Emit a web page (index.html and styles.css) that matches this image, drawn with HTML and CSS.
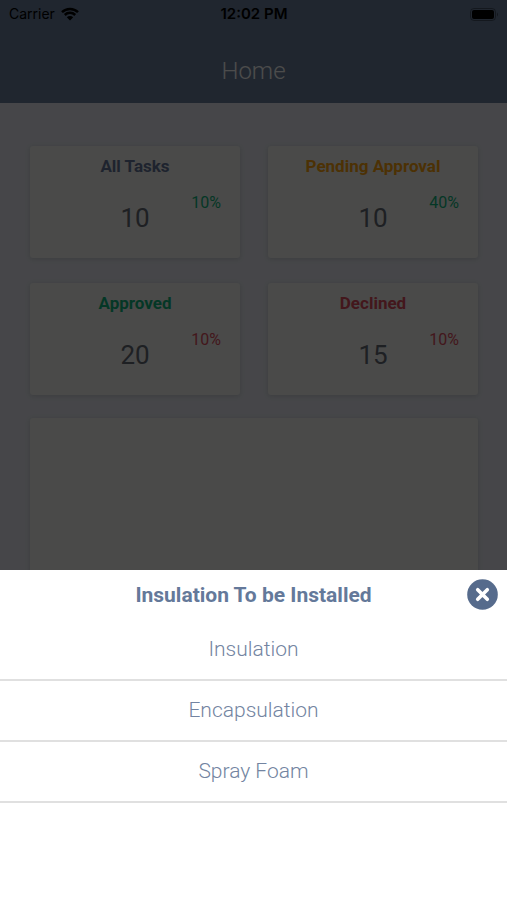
FILE: index.html
```html
<!DOCTYPE html>
<html lang="en">
<head>
<meta charset="utf-8">
<meta name="viewport" content="width=device-width, initial-scale=1">
<title>Home</title>
<link rel="stylesheet" href="styles.css">
</head>
<body>
<div class="screen">
  <header class="top">
    <div class="status">
      <span class="carrier">Carrier
        <svg class="wifi" viewBox="0 0 18 14" aria-hidden="true"><path d="M1 5.2a11.4 11.4 0 0 1 16 0M3.8 8a7.4 7.4 0 0 1 10.4 0" fill="none" stroke="#000" stroke-width="2.5"/><path d="M9 13.6 5.8 10.3a4.6 4.6 0 0 1 6.4 0z"/></svg>
      </span>
      <span class="time">12:02 PM</span>
      <svg class="battery" viewBox="0 0 29 13" aria-hidden="true"><rect x=".5" y=".5" width="25" height="12" rx="3.5" fill="none" stroke="#000" stroke-opacity=".35"/><rect x="2" y="2" width="22" height="9" rx="2"/><path d="M27 4.5q2 2 0 4z" opacity=".4"/></svg>
    </div>
    <h1 class="title">Home</h1>
  </header>
  <main class="board">
    <div class="stats">
      <section class="card">
        <h2 class="name navy">All Tasks</h2>
        <span class="rate green">10%</span>
        <span class="count">10</span>
      </section>
      <section class="card">
        <h2 class="name amber">Pending Approval</h2>
        <span class="rate green">40%</span>
        <span class="count">10</span>
      </section>
      <section class="card">
        <h2 class="name green">Approved</h2>
        <span class="rate red">10%</span>
        <span class="count">20</span>
      </section>
      <section class="card">
        <h2 class="name red">Declined</h2>
        <span class="rate red">10%</span>
        <span class="count">15</span>
      </section>
    </div>
    <section class="card wide"></section>
  </main>
</div>
<div class="scrim">
  <div class="sheet" role="dialog" aria-labelledby="sheet-title">
    <div class="sheet-head">
      <h2 class="sheet-title" id="sheet-title">Insulation To be Installed</h2>
      <button class="close" type="button" aria-label="Close">
        <svg viewBox="0 0 31 31" aria-hidden="true"><circle cx="15.5" cy="15.5" r="15.3" fill="#566b8c"/><path d="m10.7 10.7 9.6 9.6M20.3 10.7l-9.6 9.6" stroke="#fff" stroke-width="3.6" stroke-linecap="round"/></svg>
      </button>
    </div>
    <button class="option" type="button">Insulation</button>
    <button class="option" type="button">Encapsulation</button>
    <button class="option" type="button">Spray Foam</button>
  </div>
</div>
</body>
</html>
```
FILE: styles.css
```css
* {
  box-sizing: border-box;
}

body {
  margin: 0;
  font-family: Roboto, "Liberation Sans", sans-serif;
  background: #e9ecf3;
}

h1,
h2 {
  margin: 0;
}

.screen {
  display: flex;
  flex-direction: column;
  height: 100vh;
  overflow: hidden;
}

.top {
  padding-bottom: 16px;
  background: #6b7f9d;
}

.status {
  display: grid;
  grid-template-columns: 1fr auto 1fr;
  align-items: center;
  height: 28px;
  padding: 0 8px 0 9px;
  font: 15px/20px Inter, sans-serif;
}

.carrier {
  display: flex;
  align-items: center;
  gap: 6px;
  font-size: 14px;
}

.wifi {
  width: 18px;
  height: 14px;
}

.time {
  font-weight: 600;
}

.battery {
  justify-self: end;
  width: 29px;
  height: 13px;
}

.title {
  padding-top: 27px;
  color: #fff;
  font-size: 24px;
  font-weight: 300;
  line-height: 32px;
  text-align: center;
}

.board {
  display: flex;
  flex: 1;
  flex-direction: column;
  gap: 23px;
  padding: 43px 29px 0 30px;
}

.stats {
  display: grid;
  grid-template-columns: 1fr 1fr;
  gap: 25px 28px;
}

.card {
  display: flex;
  flex-direction: column;
  height: 112px;
  padding: 10px 19px;
  border-radius: 3px;
  background: #f8f8f5;
  box-shadow: 0 1px 5px rgba(0, 0, 0, 0.14);
}

.wide {
  flex: 1;
}

.name {
  font-size: 17px;
  font-weight: 700;
  line-height: 20px;
  text-align: center;
}

.rate {
  padding-top: 17px;
  font-size: 16px;
  line-height: 20px;
  text-align: right;
}

.count {
  color: #666b76;
  font-size: 26px;
  line-height: 10px;
  text-align: center;
}

.navy {
  color: #66779b;
}

.amber {
  color: #ffa510;
}

.green {
  color: #10b880;
}

.red {
  color: #e04f60;
}

.scrim {
  position: fixed;
  inset: 0;
  display: flex;
  flex-direction: column;
  justify-content: flex-end;
  background: rgba(0, 0, 0, 0.7);
}

.sheet {
  padding-bottom: 97px;
  background: #fff;
}

.sheet-head {
  display: grid;
  grid-template-columns: 1fr auto 1fr;
  align-items: center;
  height: 50px;
  padding: 0 9px 1px;
}

.sheet-title {
  grid-column: 2;
  color: #64799a;
  font-size: 21px;
  font-weight: 700;
  line-height: 24px;
}

.close {
  justify-self: end;
  width: 31px;
  height: 31px;
  padding: 0;
  border: 0;
  background: none;
}

.close svg {
  display: block;
}

.option {
  display: block;
  width: 100%;
  height: 61px;
  padding: 0 0 1px;
  border: 0;
  border-bottom: 2px solid #e0e0e0;
  background: none;
  color: #7384a1;
  font: 300 21px/24px Roboto, sans-serif;
}
```
